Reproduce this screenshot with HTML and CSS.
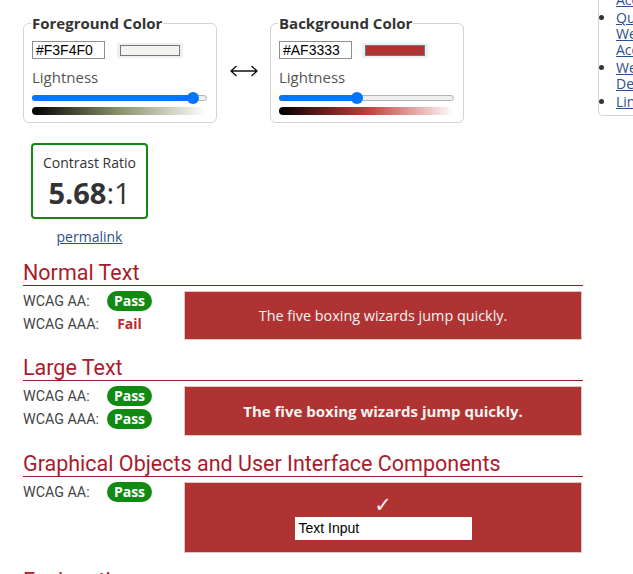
FILE: index.html
```html
<!DOCTYPE html>
<html lang="en">
<head>
<meta charset="utf-8">
<title>Contrast Checker</title>
<link rel="stylesheet" href="styles.css">
</head>
<body>
<div class="page">
  <main class="main">
    <div class="pickers">
      <fieldset class="picker picker-fg">
        <legend>Foreground Color</legend>
        <div class="color-row">
          <span class="hex">#F3F4F0</span>
          <span class="swatch-btn"><span class="swatch swatch-fg"></span></span>
        </div>
        <div class="light-label">Lightness</div>
        <div class="slider">
          <div class="track"></div>
          <div class="fill" style="width:161px"></div>
          <div class="thumb" style="left:155px"></div>
        </div>
        <div class="grad grad-fg"></div>
      </fieldset>
      <div class="swap">
        <svg width="28" height="12" viewBox="0 0 28 12" aria-hidden="true">
          <path d="M1 6 H27 M6.5 1 L1 6 L6.5 11 M21.5 1 L27 6 L21.5 11" fill="none" stroke="#111" stroke-width="1.4"/>
        </svg>
      </div>
      <fieldset class="picker picker-bg">
        <legend>Background Color</legend>
        <div class="color-row">
          <span class="hex">#AF3333</span>
          <span class="swatch-btn"><span class="swatch swatch-bg"></span></span>
        </div>
        <div class="light-label">Lightness</div>
        <div class="slider">
          <div class="track"></div>
          <div class="fill" style="width:78px"></div>
          <div class="thumb" style="left:72px"></div>
        </div>
        <div class="grad grad-bg"></div>
      </fieldset>
    </div>

    <div class="ratio-col">
      <div class="ratio-box">
        <div class="ratio-label">Contrast Ratio</div>
        <div class="ratio-value"><b>5.68</b>:1</div>
      </div>
      <a class="permalink" href="#">permalink</a>
    </div>

    <section class="result">
      <h2 class="result-title">Normal Text</h2>
      <div class="result-body">
        <div class="checks">
          <div class="check-row"><span class="wcag">WCAG AA:</span><span class="pass">Pass</span></div>
          <div class="check-row"><span class="wcag">WCAG AAA:</span><span class="fail">Fail</span></div>
        </div>
        <div class="sample sample-normal">The five boxing wizards jump quickly.</div>
      </div>
    </section>

    <section class="result">
      <h2 class="result-title">Large Text</h2>
      <div class="result-body">
        <div class="checks">
          <div class="check-row"><span class="wcag">WCAG AA:</span><span class="pass">Pass</span></div>
          <div class="check-row"><span class="wcag">WCAG AAA:</span><span class="pass">Pass</span></div>
        </div>
        <div class="sample sample-large">The five boxing wizards jump quickly.</div>
      </div>
    </section>

    <section class="result">
      <h2 class="result-title">Graphical Objects and User Interface Components</h2>
      <div class="result-body">
        <div class="checks">
          <div class="check-row"><span class="wcag">WCAG AA:</span><span class="pass">Pass</span></div>
        </div>
        <div class="sample sample-ui">
          <div class="tick">&#10003;</div>
          <div class="text-input">Text Input</div>
        </div>
      </div>
    </section>

    <section class="result">
      <h2 class="result-title">Explanation</h2>
    </section>
  </main>

  <aside class="side">
    <ul class="side-list">
      <li><a href="#">Contrast and Color<br>Accessibility</a></li>
      <li><a href="#">Quick Reference:<br>Web Content<br>Accessibility</a></li>
      <li><a href="#">Web Accessibility for<br>Designers</a></li>
      <li><a href="#">Link Contrast Checker</a></li>
    </ul>
  </aside>
</div>
</body>
</html>
```

FILE: styles.css
```css
html, body {
  margin: 0;
  padding: 0;
  background: #fff;
  overflow: hidden;
}

body {
  font-family: "Open Sans", "Liberation Sans", sans-serif;
  color: #333;
  width: 633px;
  height: 574px;
}

.page {
  display: flex;
  align-items: flex-start;
}

.main {
  flex: none;
  width: 560px;
  padding-left: 23px;
  margin-right: 15px;
  padding-top: 13px;
}

/* ---------- color pickers ---------- */
.pickers {
  display: flex;
  align-items: center;
}

.picker {
  box-sizing: border-box;
  width: 194px;
  margin: 0;
  padding: 0 8px 7px;
  border: 1px solid #d3d3d3;
  border-radius: 6px;
  min-inline-size: 0;
}

.picker legend {
  font-size: 15px;
  line-height: 20px;
  font-weight: 700;
  color: #333;
  padding: 0 1px;
  margin-left: -1px;
}

.color-row {
  display: flex;
  align-items: center;
  margin-top: 8px;
  height: 18px;
}

.hex {
  box-sizing: border-box;
  width: 73px;
  height: 18px;
  border: 1px solid #8f8f8f;
  font-family: "Liberation Sans", Arial, sans-serif;
  font-size: 14px;
  line-height: 16px;
  padding-left: 3px;
  color: #000;
}

.swatch-btn {
  display: flex;
  margin-left: 12px;
  padding: 2px 3px;
  background: #efefef;
  border-radius: 1px;
}

.swatch {
  display: block;
  width: 60px;
  height: 11px;
  box-sizing: border-box;
  border: 1px solid #767676;
}

.picker-bg .swatch-btn { margin-left: 10px; }

.swatch-fg { background: #F3F4F0; }
.swatch-bg { background: #AF3333; }

.light-label {
  margin-top: 9px;
  font-size: 15px;
  line-height: 18px;
  color: #555;
}

.slider {
  position: relative;
  width: 175px;
  height: 12px;
  margin-top: 6px;
}

.track {
  position: absolute;
  left: 0;
  right: 0;
  top: 3px;
  height: 6px;
  box-sizing: border-box;
  border: 1px solid #b5b5b5;
  border-radius: 3px;
  background: #efefef;
}

.fill {
  position: absolute;
  left: 0;
  top: 3px;
  height: 6px;
  border-radius: 3px;
  background: #0075ff;
}

.thumb {
  position: absolute;
  top: 0;
  width: 12px;
  height: 12px;
  border-radius: 50%;
  background: #0075ff;
}

.grad {
  width: 175px;
  height: 8px;
  margin-top: 3px;
  border-radius: 4px;
}

.grad-fg { background: linear-gradient(to right, #000, #89936c 50%, #fff); }
.grad-bg { background: linear-gradient(to right, #000, #c63939 50%, #fff); }

.swap {
  width: 53px;
  display: flex;
  justify-content: center;
  padding-top: 5px;
}

/* ---------- ratio ---------- */
.ratio-col {
  display: inline-flex;
  flex-direction: column;
  align-items: center;
  margin-left: 8px;
  margin-top: 20px;
}

.ratio-box {
  box-sizing: border-box;
  width: 117px;
  height: 76px;
  border: 2px solid #138813;
  border-radius: 4px;
  padding: 8px 0 0;
  text-align: center;
}

.ratio-label {
  font-size: 14px;
  line-height: 20px;
  color: #333;
}

.ratio-value {
  font-size: 29px;
  line-height: 36px;
  color: #333;
  margin-top: 2px;
}

.ratio-value b { font-weight: 700; }

.permalink {
  margin-top: 9px;
  font-size: 14px;
  line-height: 18px;
  color: #2d4f8c;
  text-decoration: underline;
}

/* ---------- results ---------- */
.result { margin-top: 16px; }

.main > .result:first-of-type { margin-top: 15px; }

.result-title {
  margin: 0;
  font-family: Roboto, "Liberation Sans", sans-serif;
  font-weight: 400;
  font-size: 21.5px;
  line-height: 24px;
  color: #a81c2c;
  border-bottom: 1px solid #9b1c27;
}

.result-body {
  display: flex;
  align-items: flex-start;
  margin-top: 5px;
}

.checks {
  flex: none;
  width: 161px;
  display: flex;
  flex-direction: column;
  gap: 3px;
}

.check-row {
  display: flex;
  align-items: center;
  height: 20px;
}

.wcag {
  width: 84px;
  font-family: Roboto, "Liberation Sans", sans-serif;
  font-size: 14.3px;
  color: #444;
}

.pass {
  display: inline-block;
  width: 45px;
  height: 20px;
  border-radius: 10px;
  background: #118a11;
  color: #fff;
  font-weight: 700;
  font-size: 14px;
  line-height: 20px;
  text-align: center;
}

.fail {
  display: inline-block;
  width: 45px;
  color: #c0262c;
  font-weight: 700;
  font-size: 14px;
  line-height: 20px;
  text-align: center;
}

.sample {
  box-sizing: border-box;
  width: 398px;
  background: #AF3333;
  color: #F3F4F0;
  border: 1px solid #e2c4c4;
  text-align: center;
}

.sample-normal {
  height: 49px;
  font-size: 14.4px;
  line-height: 47px;
}

.sample-large {
  height: 50px;
  font-size: 15px;
  font-weight: 700;
  line-height: 48px;
}

.sample-ui {
  height: 71px;
  padding-top: 12px;
  display: flex;
  flex-direction: column;
  align-items: center;
}

.tick {
  font-family: "DejaVu Sans", sans-serif;
  font-size: 21px;
  line-height: 21px;
  color: #F3F4F0;
}

.text-input {
  box-sizing: border-box;
  width: 177px;
  height: 23px;
  margin-top: 1px;
  background: #fff;
  color: #000;
  font-family: "Liberation Sans", Arial, sans-serif;
  font-size: 14px;
  line-height: 23px;
  padding-left: 4px;
  text-align: left;
}

/* ---------- sidebar ---------- */
.side {
  flex: none;
  width: 200px;
  margin-top: -35px;
  border: 1px solid #d3d3d3;
  border-right: none;
  border-radius: 0 0 0 5px;
  padding: 8px 0 3px;
}

.side-list {
  margin: 0;
  padding: 0 0 0 17px;
  font-size: 14px;
  line-height: 16px;
  white-space: nowrap;
}

.side-list li {
  margin: 2px 0;
  color: #333;
}

.side-list a {
  color: #2d4f8c;
  text-decoration: underline;
}
```
